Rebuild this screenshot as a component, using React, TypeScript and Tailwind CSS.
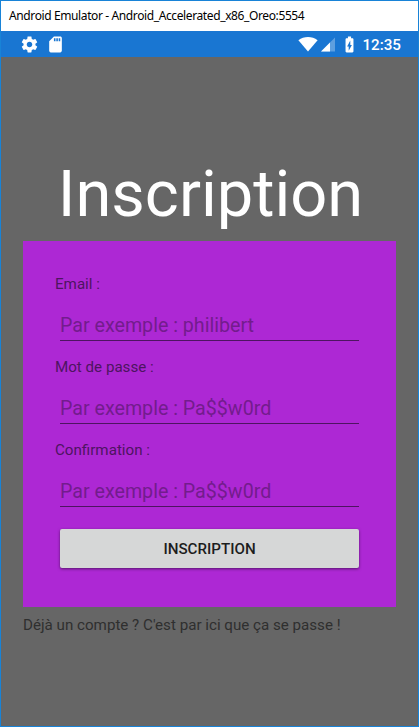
import React from "react";

function Gear() {
  return (
    <svg className="ml-[19px] size-[19px] shrink-0" viewBox="0 0 24 24" fill="white">
      <path d="M19.43 12.98c.04-.32.07-.64.07-.98s-.03-.66-.07-.98l2.11-1.65c.19-.15.24-.42.12-.64l-2-3.46c-.12-.22-.39-.3-.61-.22l-2.49 1c-.52-.4-1.08-.73-1.69-.98l-.38-2.65C14.46 2.18 14.25 2 14 2h-4c-.25 0-.46.18-.49.42l-.38 2.65c-.61.25-1.17.59-1.69.98l-2.49-1c-.23-.09-.49 0-.61.22l-2 3.46c-.13.22-.07.49.12.64l2.11 1.65c-.04.32-.07.65-.07.98s.03.66.07.98l-2.11 1.65c-.19.15-.24.42-.12.64l2 3.46c.12.22.39.3.61.22l2.49-1c.52.4 1.08.73 1.69.98l.38 2.65c.03.24.24.42.49.42h4c.25 0 .46-.18.49-.42l.38-2.65c.61-.25 1.17-.59 1.69-.98l2.49 1c.23.09.49 0 .61-.22l2-3.46c.12-.22.07-.49-.12-.64l-2.11-1.65zM12 15.5c-1.93 0-3.5-1.57-3.5-3.5s1.57-3.5 3.5-3.5 3.5 1.57 3.5 3.5-1.57 3.5-3.500 3.500z" />
    </svg>
  );
}

function SdCard() {
  return (
    <svg className="ml-[7px] size-[19px] shrink-0" viewBox="0 0 24 24" fill="white">
      <path d="M18 2h-8L4.020 8 4 20c0 1.100.9 2 2 2h12c1.100 0 2-.9 2-2V4c0-1.100-.9-2-2-2zm-6 6h-2V4h2v4zm3 0h-2V4h2v4zm3 0h-2V4h2v4z" />
    </svg>
  );
}

function Wifi() {
  return (
    <svg className="h-[16px] w-[20px] shrink-0" viewBox="0 0 20 16" fill="white">
      <path d="M.4 4.2C3.2 2 6.500 1 10 1s6.800 1 9.600 3.200L10 15.500z" />
    </svg>
  );
}

function Signal() {
  return (
    <svg className="ml-[2px] h-[16px] w-[15px] shrink-0" viewBox="0 0 15 16" fill="white">
      <path d="M15 1.500V15.500H1z" fillOpacity="0.3" />
      <path d="M10 6.500V15.500H1z" />
    </svg>
  );
}

function Battery() {
  return (
    <svg className="ml-[5px] size-[19px] shrink-0" viewBox="0 0 24 24" fill="white">
      <path d="M15.670 4H14V2h-4v2H8.330C7.600 4 7 4.600 7 5.330v15.330C7 21.400 7.600 22 8.330 22h7.330c.74 0 1.340-.6 1.340-1.330V5.330C17 4.600 16.400 4 15.670 4zM11 20v-5.500H9L13 7v5.500h2L11 20z" />
    </svg>
  );
}

function Field({ label, hint }: { label: string; hint: string }) {
  return (
    <div className="flex h-[83px] flex-col">
      <label className="ml-[32px] h-5 text-[15.15px] leading-5 whitespace-nowrap text-[#4e1461]">{label}</label>
      <div className="mt-[18px] ml-[37px] flex h-[29px] w-[299px] items-start border-b border-[#4e1461] text-[19.65px] leading-7 whitespace-nowrap text-[#731c8d]">
        {hint}
      </div>
    </div>
  );
}

export default function App() {
  return (
    <div className="flex h-[727px] w-[419px] flex-col overflow-hidden border border-[#1883d7] bg-[#666666] font-['Roboto',sans-serif]">
      <header className="flex h-[30px] shrink-0 items-center bg-white pl-2 font-['Noto_Sans',sans-serif] text-[12px] whitespace-nowrap text-black">
        <span className="tracking-[-0.385px]">Android Emulator - Android_Accelerated_x86_Oreo:5554</span>
      </header>
      <div className="flex h-[26px] shrink-0 items-center bg-[#1976d2]">
        <Gear />
        <SdCard />
        <div className="ml-auto flex items-center pr-[17px]">
          <Wifi />
          <Signal />
          <Battery />
          <span className="ml-[3px] pt-[1px] text-[15.2px] leading-5 font-medium text-white">12:35</span>
        </div>
      </div>
      <main className="flex flex-1 flex-col pt-[97px]">
        <h1 className="h-[87px] pl-[2px] text-center text-[65px] leading-[80px] font-normal text-white">Inscription</h1>
        <section className="ml-[22px] flex h-[366px] w-[373px] shrink-0 flex-col bg-[#ad28d4] pt-[33px]">
          <Field label="Email :" hint="Par exemple : philibert" />
          <Field label="Mot de passe :" hint="Par exemple : Pa$$w0rd" />
          <Field label="Confirmation :" hint="Par exemple : Pa$$w0rd" />
          <button className="mt-[6px] ml-[37px] h-[39px] w-[299px] rounded-[2px] bg-[#d6d7d7] text-[15.15px] leading-5 font-medium text-[#1d1d1d] shadow-[0_1px_3px_rgba(0,0,0,0.5)]">
            INSCRIPTION
          </button>
        </section>
        <p className="mt-2 ml-[22px] text-[15.15px] leading-5 whitespace-nowrap text-[#2f2f2f]">Déjà un compte ? C'est par ici que ça se passe !</p>
      </main>
    </div>
  );
}
